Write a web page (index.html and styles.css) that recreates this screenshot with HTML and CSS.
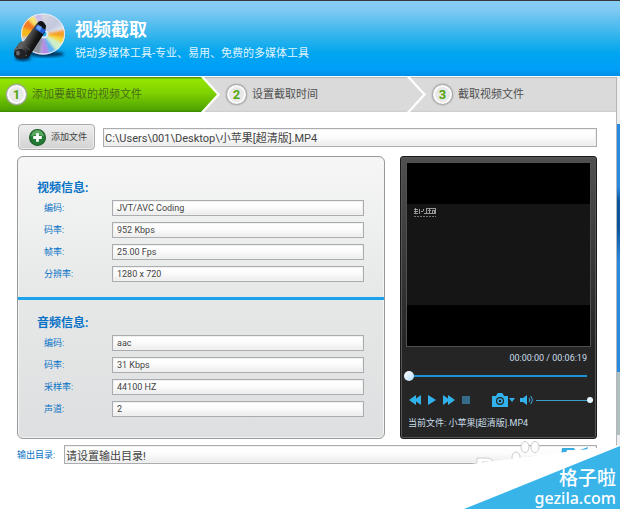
FILE: index.html
```html
<!DOCTYPE html>
<html lang="zh-CN">
<head>
<meta charset="utf-8">
<title>视频截取</title>
<link rel="stylesheet" href="styles.css">
</head>
<body>
<header class="header">
  <svg class="logo" viewBox="0 0 54 52" aria-hidden="true">
    <defs>
      <linearGradient id="disc" x1="0" y1="0" x2="1" y2="1"><stop offset="0" stop-color="#e9e4dc"/><stop offset=".5" stop-color="#c3c9de"/><stop offset="1" stop-color="#fafaff"/></linearGradient>
      <linearGradient id="tube" x1="0" y1="0" x2="1" y2=".6"><stop offset="0" stop-color="#111"/><stop offset=".45" stop-color="#666"/><stop offset=".7" stop-color="#181818"/><stop offset="1" stop-color="#000"/></linearGradient>
      <filter id="soft"><feGaussianBlur stdDeviation="1.6"/></filter>
      <filter id="blend"><feGaussianBlur stdDeviation="1"/></filter>
      <clipPath id="round"><ellipse cx="30" cy="22" rx="22" ry="20.5"/></clipPath>
    </defs>
    <ellipse cx="33" cy="42" rx="18" ry="3" fill="#02345e" filter="url(#soft)"/>
    <ellipse cx="10" cy="46" rx="8" ry="3" fill="#02345e" filter="url(#soft)"/>
    <ellipse cx="30" cy="22" rx="22" ry="20.5" fill="url(#disc)"/>
    <g clip-path="url(#round)"><g filter="url(#blend)">
      <path d="M30 22 4 26 4 8z" fill="#f6b81e"/>
      <path d="M30 22 4 14 12 0z" fill="#f47b22"/>
      <path d="M30 22 11 4 19 0z" fill="#f7e46a"/>
      <path d="M30 22 20 0 28 0z" fill="#c9bcec"/>
      <path d="M30 22 54 13 54 20z" fill="#dfe5ec"/>
      <path d="M30 22 54 17 54 27z" fill="#f6a128"/>
      <path d="M30 22 54 26 50 35z" fill="#f9d83d"/>
      <path d="M30 22 51 32 44 40z" fill="#cdf0c7"/>
      <path d="M30 22 44 40 35 44z" fill="#5db4ee"/>
      <path d="M30 22 37 44 28 44z" fill="#b58ae6"/>
      <path d="M30 22 27 44 17 42z" fill="#8d929c"/>
    </g></g>
    <ellipse cx="30" cy="22" rx="21.5" ry="20" fill="none" stroke="#e8eef8"/>
    <circle cx="31" cy="22" r="4.5" fill="#d8e8f8"/><circle cx="31" cy="22" r="2.4" fill="#25a6e2"/>
    <path d="M24 11Q29 8 33 14L32 20 16 45Q10 49 2 43L1 38 7 30 11 29z" fill="url(#tube)"/>
    <path d="M24 13 33 18 30 22 22 17z" fill="#245fd8"/><path d="M25 13 29 15 27 19 23 16z" fill="#69a5ff"/>
    <path d="M25 10Q30 7 33 14L32 16 25 12z" fill="#101318"/>
    <path d="M2 36 14 44" stroke="#777"/><path d="M8 31 17 38" stroke="#555"/>
    <ellipse cx="7" cy="42" rx="6" ry="5" fill="#202226"/><ellipse cx="5" cy="41" rx="2" ry="2.5" fill="#62666b"/>
  </svg>
  <div class="titles">
    <h1>视频截取</h1>
    <p>锐动多媒体工具-专业、易用、免费的多媒体工具</p>
  </div>
</header>
<div class="workspace">
  <main class="main">
    <ol class="steps">
      <li class="active"><b>1</b><span>添加要截取的视频文件</span></li>
      <li><b>2</b><span>设置截取时间</span></li>
      <li><b>3</b><span>截取视频文件</span></li>
    </ol>
    <div class="content">
      <div class="toolbar">
        <button class="add" type="button">
          <svg viewBox="0 0 16 16" aria-hidden="true"><circle cx="8" cy="8" r="7.5" fill="#237a32" stroke="#1b5e29"/><path d="M2 7a6 6 0 0 1 12 0Q8 4 2 7" fill="#5aa862"/><path d="M8 4v8M4 8h8" stroke="#fff" stroke-width="2.6"/></svg>
          添加文件
        </button>
        <input class="field large" type="text" aria-label="文件路径" value="C:\Users\001\Desktop\小苹果[超清版].MP4">
      </div>
      <div class="columns">
        <div class="panel">
          <section class="info">
            <h2>视频信息:</h2>
            <div class="row"><label for="vc">编码:</label><input class="field" id="vc" value="JVT/AVC Coding" readonly></div>
            <div class="row"><label for="vb">码率:</label><input class="field" id="vb" value="952 Kbps" readonly></div>
            <div class="row"><label for="vf">帧率:</label><input class="field" id="vf" value="25.00 Fps" readonly></div>
            <div class="row"><label for="vr">分辨率:</label><input class="field" id="vr" value="1280 x 720" readonly></div>
          </section>
          <section class="info audio">
            <h2>音频信息:</h2>
            <div class="row"><label for="ac">编码:</label><input class="field" id="ac" value="aac" readonly></div>
            <div class="row"><label for="ab">码率:</label><input class="field" id="ab" value="31 Kbps" readonly></div>
            <div class="row"><label for="as">采样率:</label><input class="field" id="as" value="44100 HZ" readonly></div>
            <div class="row"><label for="ach">声道:</label><input class="field" id="ach" value="2" readonly></div>
          </section>
        </div>
        <section class="player">
          <div class="screen"><div class="frame">
            <svg class="caption" viewBox="0 0 22 10" aria-hidden="true"><path d="M0 1.5h4M1.500 0v6M0 3.500h4M0 5.500h4M5.500 1v5M7 3.500h2M9.500 1v2M10 5.500h2M12 .5h10M12.500 0v6M14 2.500h3M15.500 1v5M18 2.500h3M18.500 2v3M20.500 2v3M12 5.500h10M21.500 0v6" stroke="#999" fill="none"/><path d="M0 8.500h22" stroke="#777" stroke-dasharray="2 1"/></svg>
          </div></div>
          <div class="time">00:00:00 / 00:06:19</div>
          <input class="seek" type="range" aria-label="播放进度" min="0" max="100" value="0">
          <div class="controls">
            <button type="button" aria-label="快退"><svg width="12" height="10" viewBox="0 0 12 10"><path d="M7 0v10L0 5zM12 0v10L5 5z"/></svg></button>
            <button type="button" aria-label="播放"><svg width="8" height="10" viewBox="0 0 8 10"><path d="M0 0 8 5 0 10z"/></svg></button>
            <button type="button" aria-label="快进"><svg width="12" height="10" viewBox="0 0 12 10"><path d="M0 0 7 5 0 10zM5 0 12 5 5 10z"/></svg></button>
            <button type="button" class="stop" aria-label="停止"><svg width="8" height="8" viewBox="0 0 8 8"><path d="M0 0h8v8H0z"/></svg></button>
            <button type="button" class="camera" aria-label="截图"><svg width="23" height="14" viewBox="0 0 23 14"><path fill-rule="evenodd" d="M0 3h4l1-2h6l1 2h4v11H0zM8 4a4 4 0 1 0 0 8 4 4 0 0 0 0-8zM5.500 0h5v1h-5z"/><circle cx="8" cy="8" r="2.800"/><circle cx="8" cy="8" r="1.200" fill="#222"/><path d="M17 5h6l-3 4z"/></svg></button>
            <button type="button" class="sound" aria-label="音量"><svg width="13" height="10" viewBox="0 0 13 10"><path d="M0 3h3l4-3v10L3 7H0z"/><path d="M9 3q1.500 2 0 4M10.500 1q3.500 4 0 8" fill="none" stroke="#3aabdf"/></svg></button>
            <input class="volume" type="range" aria-label="音量大小" min="0" max="100" value="100">
          </div>
          <p class="current">当前文件: 小苹果[超清版].MP4</p>
        </section>
      </div>
      <div class="output">
        <label for="out">输出目录:</label><input class="field large" id="out" type="text" value="请设置输出目录!">
      </div>
    </div>
  </main>
  <div class="desktop"></div>
</div>
<div class="badge">
  <svg viewBox="0 0 156 73" aria-hidden="true">
    <g fill="#fff" stroke="#ccc"><ellipse cx="52" cy="21" rx="4" ry="5"/><ellipse cx="61" cy="11" rx="4" ry="5.500"/><ellipse cx="71" cy="11" rx="4" ry="5.500"/><path d="M58 28q6-12 14-4 8 1 6 8H58z"/></g>
    <path d="M13 34V22h10q7 0 6 8M18 29v-3h6M33 32v-5h8" fill="#fff" stroke="#ccc"/>
    <path d="M98 12h12l1 2h-8l-1 5h-5zM116 14l8-3-1 4z" fill="#3aabdf"/>
    <path d="M0 29 156 9V73H0z" fill="#fff"/>
    <path d="M0 73 156 10V73z" fill="#38b4e9"/>
  </svg>
  <div class="site"><span class="name">格子啦</span><span class="url">gezila.com</span></div>
</div>
</body>
</html>
```
FILE: styles.css
```css
* { box-sizing: border-box; }
body {
  margin: 0;
  min-height: 100vh;
  display: flex;
  flex-direction: column;
  background: #fff;
  color: #444;
  font: 9px/12px Roboto, "Noto Sans CJK SC", sans-serif;
}
h1, h2, p, ol { margin: 0; padding: 0; font-size: inherit; }
button, input { font: inherit; color: inherit; margin: 0; }

.header {
  display: flex;
  gap: 8px;
  height: 76px;
  padding: 11px 13px;
  border-top: 1px solid #34383c;
  background: linear-gradient(#8acdf4, #7fc9f2 12%, #2fb3ec 48%, #00a5ef 70%, #009ff8 90%, #008fe8);
  color: #fff;
}
.logo { width: 54px; height: 52px; }
.titles h1 { font-size: 18px; line-height: 24px; margin-top: 6px; }
.titles p { font-size: 11px; line-height: 16px; margin-top: 4px; color: #e0f5ff; }

.workspace { flex: 1; display: flex; padding-top: 1px; }
.main { flex: 1; min-width: 0; border-right: 1px solid #b4b7ba; }
.desktop {
  width: 3px;
  background: linear-gradient(#eee 47px, #2a8ae0 47px 110px, #0b539b 125px 150px, #2a8ae0 185px 295px, #b0c0c0 295px 358px, #eee 358px);
}

.steps {
  display: grid;
  grid-template-columns: 201fr 206fr 209fr;
  list-style: none;
  font-size: 11px;
  color: #505050;
}
.steps li {
  --fill: linear-gradient(#bbb 1px, #dadada 1px 33px, #ccc);
  position: relative;
  display: flex;
  align-items: center;
  gap: 5px;
  height: 35px;
  padding-left: 25px;
  background: var(--fill);
  white-space: nowrap;
}
.steps li:nth-child(1) { z-index: 3; }
.steps li:nth-child(2) { z-index: 2; }
.steps .active {
  --fill: linear-gradient(#559c00 1px, #94e600 2px, #80d200 45%, #4da300 33px, #3b8700);
  padding-left: 6px;
  color: #466d18;
}
.steps li:not(:last-child)::before,
.steps li:not(:last-child)::after {
  content: "";
  position: absolute;
  top: 0;
  left: 100%;
  width: 16px;
  height: 100%;
  background: var(--fill);
  clip-path: polygon(0 0, 100% 50%, 0 100%);
}
.steps li:not(:last-child)::before {
  width: 19px;
  background: #fff;
  clip-path: polygon(0 0, 3px 0, 100% 50%, 3px 100%, 0 100%);
}
.steps b {
  width: 21px;
  height: 21px;
  border: 1px solid #aaa;
  border-radius: 50%;
  background: #e8e8e8;
  box-shadow: inset 0 0 0 2px #fafafa, 0 0 2px #999;
  color: #55a510;
  font-size: 13px;
  line-height: 19px;
  text-align: center;
}

.content { padding: 12px 19px 12px 17px; }
.toolbar { display: flex; align-items: center; gap: 8px; padding-left: 1px; }
.add {
  display: flex;
  align-items: center;
  gap: 5px;
  height: 26px;
  padding: 0 7px 0 10px;
  border: 1px solid #aaa;
  border-radius: 4px;
  background: linear-gradient(#eee, #d2d2d2);
  box-shadow: inset 0 0 0 1px #eee;
  white-space: nowrap;
}
.add svg { width: 17px; height: 17px; }
.field {
  width: 100%;
  min-width: 0;
  height: 16px;
  padding: 0 4px;
  border: 1px solid #aaacb0;
  border-radius: 0;
  background: linear-gradient(#fff, #fcfcfc 45%, #ebebeb);
  box-shadow: inset 0 0 0 1px #f0f0f0;
}
.large { flex: 1; height: 19px; padding: 0 1px; font-size: 11px; }

.columns {
  display: grid;
  grid-template-columns: minmax(0, 368fr) minmax(0, 197fr);
  gap: 15px;
  margin: 6px 0;
}
.panel {
  border: 1px solid #999;
  border-radius: 6px;
  background: linear-gradient(#f6f6f6, #e6e8e8 50%, #dddfe0);
  box-shadow: inset 0 0 0 1px #f4f4f4;
  color: #0872c6;
}
.info { display: grid; gap: 6px; padding: 21px 20px 15px 19px; }
.info h2 { height: 16px; font-size: 12px; line-height: 20px; }
.audio { padding: 13px 20px 19px 19px; border-top: 3px solid #1ba4ec; }
.row { display: grid; grid-template-columns: 68px 1fr; align-items: center; padding-left: 7px; }
.row .field { color: #444; }

.player {
  display: flex;
  flex-direction: column;
  padding: 5px;
  border: 1px solid #1a1a1a;
  border-radius: 3px;
  background: linear-gradient(#505050, #303030 50%, #252525 68%);
  box-shadow: inset 0 0 0 1px #555;
  color: #c9dde8;
}
.screen { height: 185px; padding: 41px 0; border: 1px solid #505050; background: #000; }
.frame { height: 101px; padding: 4px 7px; background: #151515; }
.caption { display: block; width: 22px; height: 10px; }
.time { margin: 4px 4px 0; text-align: right; line-height: 14px; }

input[type="range"] { appearance: none; background: transparent; padding: 0; }
.seek { width: auto; height: 10px; margin: 6px 4px 0 -2px; }
.seek::-webkit-slider-runnable-track { height: 2px; background: #1c94d2; }
.seek::-webkit-slider-thumb {
  appearance: none;
  width: 10px;
  height: 10px;
  margin-top: -4px;
  border-radius: 50%;
  background: linear-gradient(135deg, #fff, #b4dcf5);
}
.controls { display: flex; align-items: center; height: 16px; margin: 11px 0 0 3px; gap: 6px; }
.controls button { display: flex; padding: 0; border: 0; background: none; }
.controls svg { fill: #32b2ec; }
.controls button + button { margin-left: 1px; }
.controls .stop svg { fill: #336d89; }
.controls button.camera { margin-left: 16px; }
.controls button.sound { margin-left: -1px; }
.volume { flex: 1; min-width: 0; height: 6px; margin-left: -3px; margin-right: -2px; }
.volume::-webkit-slider-runnable-track { height: 1px; background: #3c9fcd; }
.volume::-webkit-slider-thumb {
  appearance: none;
  width: 6px;
  height: 6px;
  margin-top: -3px;
  border-radius: 50%;
  background: #e5f4ff;
}
.current { margin: 8px 2px 3px; line-height: 14px; white-space: nowrap; }

.output { display: flex; align-items: center; gap: 7px; color: #0872c6; }
.output label { min-width: 40px; white-space: nowrap; }
.output .field { color: #444; }

.badge { position: absolute; right: 0; bottom: 0; z-index: 4; width: 156px; height: 73px; }
.badge > svg { display: block; }
.site {
  position: absolute;
  right: 4px;
  bottom: 0;
  display: flex;
  flex-direction: column;
  align-items: flex-end;
  color: #fff;
  font-weight: 500;
}
.name { font-family: "Noto Sans CJK SC", sans-serif; font-size: 19px; line-height: 20px; }
.url { font-family: "Noto Sans", sans-serif; font-size: 16px; line-height: 22px; }
```
